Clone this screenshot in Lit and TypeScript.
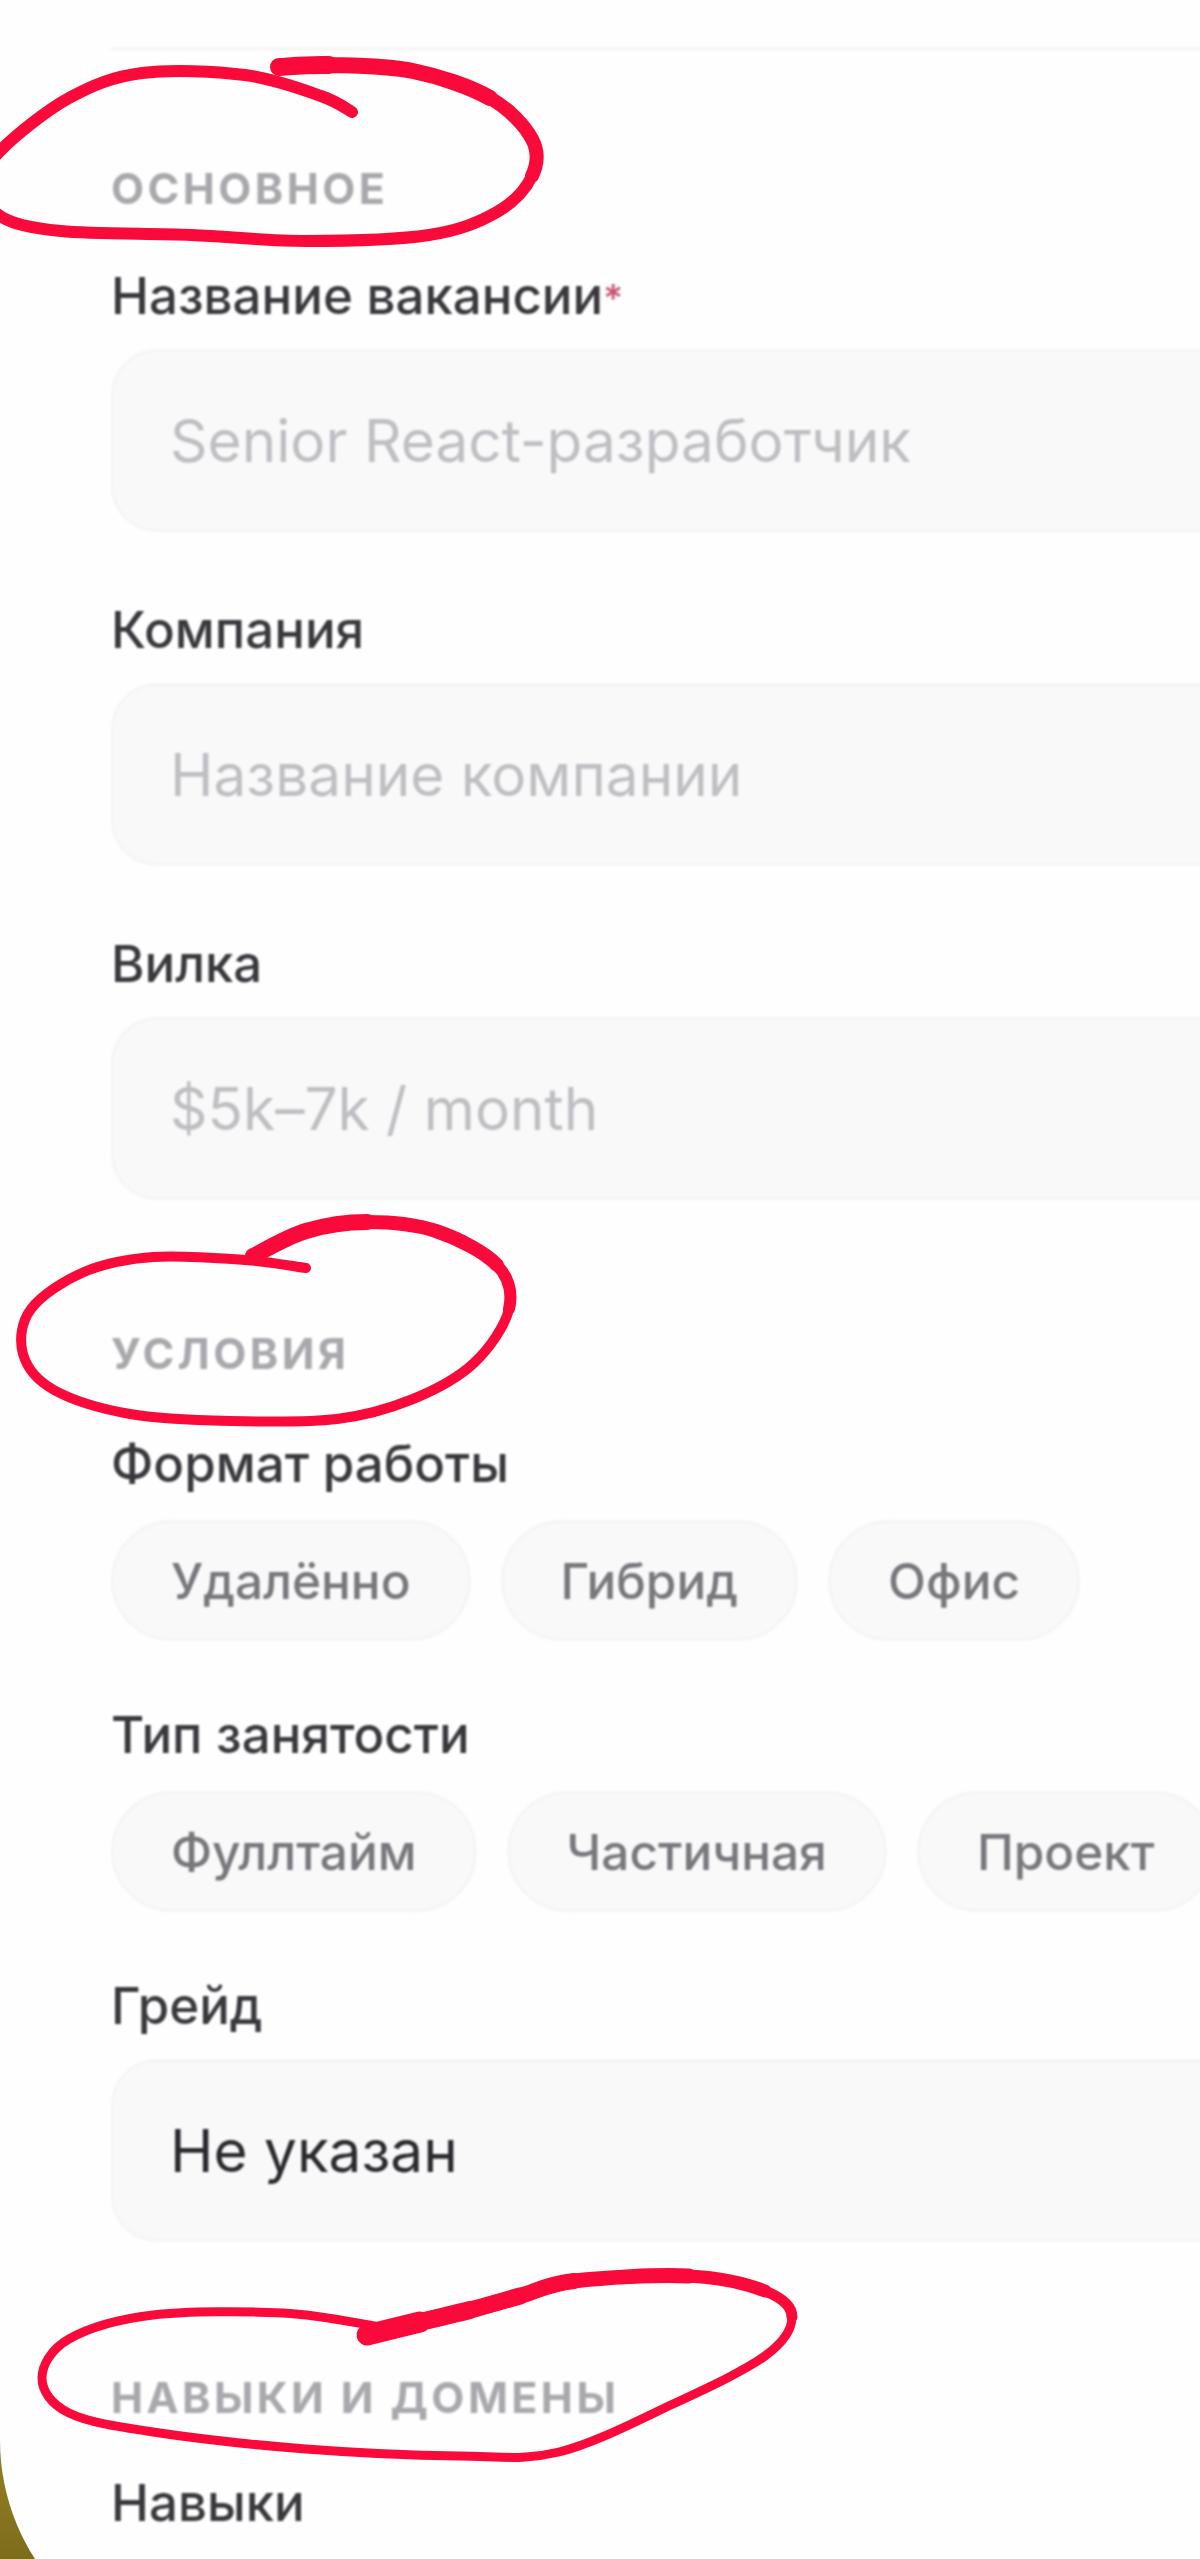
import { LitElement, html, css, svg } from "lit";
import { customElement } from "lit/decorators.js";

type P = [number, number];

/** Catmull-Rom through pts, drawing only the segments between indexes from..to. */
const smooth = (pts: P[], from = 0, to = pts.length - 1): string => {
  let d = `M${pts[from][0]} ${pts[from][1]}`;
  for (let i = from; i < to; i++) {
    const p0 = pts[Math.max(i - 1, 0)];
    const p1 = pts[i];
    const p2 = pts[i + 1];
    const p3 = pts[Math.min(i + 2, pts.length - 1)];
    const c1x = p1[0] + (p2[0] - p0[0]) / 6;
    const c1y = p1[1] + (p2[1] - p0[1]) / 6;
    const c2x = p2[0] - (p3[0] - p1[0]) / 6;
    const c2y = p2[1] - (p3[1] - p1[1]) / 6;
    d += ` C${c1x.toFixed(1)} ${c1y.toFixed(1)} ${c2x.toFixed(1)} ${c2y.toFixed(1)} ${p2[0]} ${p2[1]}`;
  }
  return d;
};

const ovals: { pts: P[]; w: number; layers: [number, number][] }[] = [
  {
    w: 12,
    layers: [[13, 14], [15, 16], [17, 18]],
    pts: [[352,112],[321,96],[245,75],[142,73],[69,98],[0,151],[-15,184],[0,216],[61,231],[191,235],[306,241],[429,235],[497,212],[532,176],[532,139],[490,98],[413,71],[329,65],[279,67]],
  },
  {
    w: 10,
    layers: [[12, 12], [13, 14], [15, 16]],
    pts: [[306,1268],[245,1260],[153,1257],[84,1272],[31,1309],[23,1354],[54,1390],[130,1414],[230,1421],[337,1419],[413,1399],[474,1363],[509,1309],[497,1265],[436,1231],[367,1222],[306,1231],[253,1256]],
  },
  {
    w: 9,
    layers: [[12, 11], [13, 13], [14, 15], [15, 16], [16, 17], [17, 18], [18, 21]],
    pts: [[375,2326],[283,2313],[153,2315],[69,2339],[42,2378],[69,2413],[153,2432],[306,2449],[459,2456],[559,2452],[673,2404],[765,2356],[792,2317],[765,2291],[689,2276],[574,2281],[520,2296],[470,2310],[420,2322],[367,2335]],
  },
];

@customElement("app-root")
export class AppRoot extends LitElement {
  static styles = css`
    :host {
      display: block;
      position: relative;
      width: 1200px;
      height: 2559px;
      overflow: hidden;
      background: linear-gradient(180deg, #a8902a 92%, #7d6c1c);
      font-family: Inter, "Noto Sans", sans-serif;
    }
    .panel {
      background: #fefefe;
      height: 2660px;
      border-bottom-left-radius: 220px;
      box-sizing: border-box;
      padding: 47px 0 0 111px;
      overflow: hidden;
    }
    .form { width: 1300px; border-top: 3px solid #f4f4f5; filter: blur(0.9px); }
    .heading {
      height: 50px;
      line-height: 50px;
      font-size: 43px;
      font-weight: 700;
      letter-spacing: 3.4px;
      color: #a9a9ad;
      text-transform: uppercase;
    }
    .heading.first { margin-top: 113px; }
    .heading.mid { margin-top: 128px; }
    .heading.last { margin-top: 130px; }
    .label {
      height: 56px;
      line-height: 56px;
      font-size: 51px;
      font-weight: 500;
      color: #38383d;
      margin-bottom: 25px;
    }
    .label.first { margin-top: 55px; }
    .label.next { margin-top: 70px; }
    .label.over-chips { margin-bottom: 28px; }
    .label.after-chips { margin-top: 66px; }
    .label.first.tight { margin-top: 58px; }
    .label.first.end { margin-top: 53px; }
    .req { color: #c9516f; font-size: 38px; vertical-align: 2px; }
    .input {
      height: 183px;
      box-sizing: border-box;
      border: 3px solid #f5f5f6;
      border-radius: 46px;
      background: #f9f9fa;
      padding-left: 56px;
      display: flex;
      align-items: center;
      font-size: 58.5px;
      color: #bfbfc3;
    }
    .input.value { color: #2a2a2e; }
    .chips { display: flex; gap: 30px; }
    .chip {
      height: 121px;
      box-sizing: border-box;
      border: 3px solid #f5f5f6;
      border-radius: 61px;
      background: #f9f9fa;
      padding: 0 57px;
      display: flex;
      align-items: center;
      font-size: 49.5px;
      font-weight: 500;
      color: #77777c;
    }
    svg.ink {
      position: absolute;
      left: 0;
      top: 0;
      width: 1200px;
      height: 2559px;
      pointer-events: none;
      filter: blur(0.7px);
    }
    svg.ink path { fill: none; stroke: #fa0a3a; stroke-linecap: round; stroke-linejoin: round; }
  `;

  render() {
    return html`
      <div class="panel">
        <div class="form">
          <div class="heading first">Основное</div>
          <div class="label first">Название вакансии<span class="req">*</span></div>
          <div class="input">Senior React-разработчик</div>
          <div class="label next">Компания</div>
          <div class="input">Название компании</div>
          <div class="label next">Вилка</div>
          <div class="input">$5k–7k / month</div>

          <div class="heading mid">Условия</div>
          <div class="label first tight over-chips">Формат работы</div>
          <div class="chips">
            <div class="chip">Удалённо</div>
            <div class="chip">Гибрид</div>
            <div class="chip">Офис</div>
          </div>
          <div class="label after-chips over-chips">Тип занятости</div>
          <div class="chips">
            <div class="chip">Фуллтайм</div>
            <div class="chip">Частичная</div>
            <div class="chip">Проект</div>
          </div>
          <div class="label after-chips">Грейд</div>
          <div class="input value">Не указан</div>

          <div class="heading last">Навыки и домены</div>
          <div class="label first end">Навыки</div>
        </div>
      </div>
      <svg class="ink" viewBox="0 0 1200 2559">
        ${ovals.map(
          (o) => svg`
            <path d=${smooth(o.pts)} stroke-width=${o.w}></path>
            ${o.layers.map(
              ([from, w]) => svg`<path d=${smooth(o.pts, from)} stroke-width=${w}></path>`
            )}
          `
        )}
      </svg>
    `;
  }
}
